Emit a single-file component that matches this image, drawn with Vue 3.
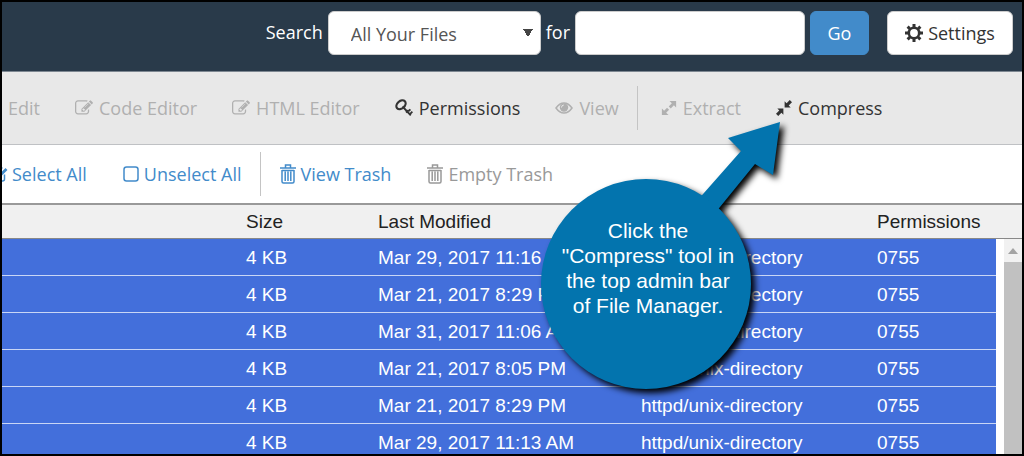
<script setup>
import { ref } from 'vue'

const scope = ref('all')
const query = ref('')

const tools = [
  { label: 'Edit', icon: 'edit' },
  { label: 'Code Editor', icon: 'edit' },
  { label: 'HTML Editor', icon: 'edit' },
  { label: 'Permissions', icon: 'key', enabled: true },
  { label: 'View', icon: 'eye' },
  { label: 'Extract', icon: 'extract', divided: true },
  { label: 'Compress', icon: 'compress', enabled: true }
]

const actions = [
  { label: 'Select All', icon: 'check', enabled: true },
  { label: 'Unselect All', icon: 'box', enabled: true },
  { label: 'View Trash', icon: 'trash', enabled: true, divided: true },
  { label: 'Empty Trash', icon: 'trash' }
]

const files = [
  'Mar 29, 2017 11:16 AM',
  'Mar 21, 2017 8:29 PM',
  'Mar 31, 2017 11:06 AM',
  'Mar 21, 2017 8:05 PM',
  'Mar 21, 2017 8:29 PM',
  'Mar 29, 2017 11:13 AM'
].map((modified, id) => ({ id, size: '4 KB', modified, type: 'httpd/unix-directory', mode: '0755' }))
</script>

<template>
  <div class="page">
    <svg class="sprite" aria-hidden="true">
      <symbol id="edit" viewBox="0 0 1792 1792">
        <path d="M888 1184l116-116-152-152-116 116v56h96v96h56zm440-720q-16-16-33 1l-350 350q-17 17-1 33t33-1l350-350q17-17 1-33zm80 594v190q0 119-84.5 203.5t-203.5 84.5h-832q-119 0-203.5-84.5t-84.5-203.5v-832q0-119 84.5-203.5t203.5-84.5h832q63 0 117 25 15 7 18 23 3 17-9 29l-49 49q-14 14-32 8-23-6-45-6h-832q-66 0-113 47t-47 113v832q0 66 47 113t113 47h832q66 0 113-47t47-113v-126q0-13 9-22l64-64q15-15 35-7t20 29zm-96-738l288 288-672 672h-288v-288zm444 132l-92 92-288-288 92-92q28-28 68-28t68 28l152 152q28 28 28 68t-28 68z" />
      </symbol>
      <symbol id="eye" viewBox="0 0 18 18">
        <path d="M1 9q3.500-5 8-5t8 5q-3.500 5-8 5t-8-5z" fill="none" stroke="currentColor" stroke-width="1.500" />
        <circle cx="9" cy="8.500" r="4.200" />
        <path d="M6.500 8.500q0-2.300 2.300-2.500" fill="none" stroke="#e8e8e8" stroke-width="1" />
      </symbol>
      <symbol id="key" viewBox="0 0 18 18">
        <ellipse cx="6" cy="5.800" rx="5.200" ry="3.700" transform="rotate(-42 6 5.800)" fill="none" stroke="currentColor" stroke-width="2.200" />
        <path d="M7.500 7.500l8.300 8.800M11 13.400l2.600-2.200M13.600 12.200l1.800-1.900M14.200 15.800l3.200-3.200" fill="none" stroke="currentColor" stroke-width="1.900" />
      </symbol>
      <symbol id="extract" viewBox="0 0 18 18">
        <path d="M9.500 1H17v7.500l-2.500-2.500-3.500 3.500-2.300-2.300L12.200 3.700zM8.500 17H1V9.500L3.500 12l3.300-3.300 2.300 2.300L5.800 14.300z" />
      </symbol>
      <symbol id="compress" viewBox="0 0 18 18">
        <path d="M9.700 8.300V1.500l2.200 2.200L15.500 0 18 2.500l-3.700 3.600 2.200 2.200zM8.300 9.700v6.800l-2.200-2.200L2.500 18 0 15.500l3.700-3.600L1.500 9.700z" />
      </symbol>
      <symbol id="trash" viewBox="0 0 18 20">
        <path d="M1 4h16M6.500 3.500V1h5v2.500M3 6.500h12M3 6V17.500q0 1.500 1.500 1.500h9q1.500 0 1.500-1.500V6M6.200 7.500V17M9 7.500V17M11.800 7.500V17" fill="none" stroke="currentColor" stroke-width="1.500" />
      </symbol>
      <symbol id="box" viewBox="0 0 18 18">
        <rect x="2" y="2" width="14" height="14" rx="2.500" fill="none" stroke="currentColor" stroke-width="1.500" />
      </symbol>
      <symbol id="check" viewBox="0 0 18 18">
        <path d="M14.500 9.500v4.500q0 2-2 2h-8q-2 0-2-2V5q0-2 2-2h8" fill="none" stroke="currentColor" stroke-width="1.500" />
        <path d="M5.500 8l3.500 3.500L16.500 4" fill="none" stroke="currentColor" stroke-width="2.800" />
      </symbol>
      <symbol id="gear" viewBox="0 0 18 18">
        <circle cx="9" cy="9" r="5.200" fill="none" stroke="currentColor" stroke-width="2.600" />
        <path d="M9 0v4M9 14v4M0 9h4M14 9h4M2.600 2.600l2.700 2.700M12.700 12.700l2.700 2.700M2.600 15.400l2.700-2.700M12.700 5.300l2.700-2.700" fill="none" stroke="currentColor" stroke-width="3" />
      </symbol>
    </svg>

    <header class="topbar">
      <form class="search" @submit.prevent>
        <label for="scope">Search</label>
        <select id="scope" v-model="scope" class="field scope">
          <option value="all">All Your Files</option>
        </select>
        <label for="query">for</label>
        <input id="query" v-model="query" class="field query" type="text" />
        <button class="go" type="submit">Go</button>
      </form>
      <button class="settings" type="button">
        <svg class="icon" aria-hidden="true"><use href="#gear" /></svg>Settings
      </button>
    </header>

    <nav class="toolbar tools" aria-label="File tools">
      <template v-for="tool in tools" :key="tool.label">
        <span v-if="tool.divided" class="divider"></span>
        <button type="button" class="tool" :disabled="!tool.enabled">
          <svg class="icon" :class="tool.icon" aria-hidden="true"><use :href="'#' + tool.icon" /></svg>{{ tool.label }}
        </button>
      </template>
    </nav>

    <nav class="toolbar actions" aria-label="Selection">
      <template v-for="action in actions" :key="action.label">
        <span v-if="action.divided" class="divider"></span>
        <button type="button" class="tool" :disabled="!action.enabled">
          <svg class="icon" :class="action.icon" aria-hidden="true"><use :href="'#' + action.icon" /></svg>{{ action.label }}
        </button>
      </template>
    </nav>

    <main class="list">
      <table>
        <colgroup>
          <col class="c-name" />
          <col class="c-size" />
          <col class="c-modified" />
          <col class="c-type" />
          <col />
        </colgroup>
        <thead>
          <tr>
            <td></td>
            <th scope="col">Size</th>
            <th scope="col">Last Modified</th>
            <th scope="col" aria-label="Type"></th>
            <th scope="col">Permissions</th>
          </tr>
        </thead>
        <tbody>
          <tr v-for="file in files" :key="file.id">
            <td></td>
            <td>{{ file.size }}</td>
            <td>{{ file.modified }}</td>
            <td>{{ file.type }}</td>
            <td>{{ file.mode }}</td>
          </tr>
        </tbody>
      </table>
      <div class="scrollbar" aria-hidden="true">
        <div class="scroll-up"><span class="caret"></span></div>
        <div class="thumb"></div>
      </div>
    </main>

    <aside class="callout">
      <svg class="bubble" viewBox="0 0 260 290" aria-hidden="true">
        <path d="M239 22L187 38l13 13-60 68 17 15 57-70 18 11z" />
        <circle cx="105" cy="184" r="105" />
      </svg>
      <p class="message">Click the<br />"Compress" tool in<br />the top admin bar<br />of File Manager.</p>
    </aside>
  </div>
</template>

<style>
body {
  margin: 0;
}
</style>

<style scoped>
.page {
  position: relative;
  box-sizing: border-box;
  height: 100vh;
  border: 2px solid #000;
  overflow: hidden;
  display: flex;
  flex-direction: column;
  background: #fff;
  font-family: "Open Sans", "Noto Sans", sans-serif;
  font-size: 18px;
  line-height: 24px;
}

.sprite {
  position: absolute;
  width: 0;
  height: 0;
}

button {
  font: inherit;
  margin: 0;
  cursor: pointer;
}

.icon {
  width: 18px;
  height: 18px;
  flex: none;
  fill: currentColor;
}

.icon.extract,
.icon.compress {
  width: 16px;
  height: 16px;
}

.icon.trash {
  height: 20px;
}

.topbar {
  flex: none;
  display: flex;
  justify-content: flex-end;
  gap: 18px;
  padding: 9px 9px 16px;
  border-bottom: 1px solid #7d8791;
  background: #293a4a;
}

.search {
  display: flex;
  align-items: center;
  gap: 5px;
}

.search label {
  color: #fff;
  padding-bottom: 2px;
}

.field {
  box-sizing: border-box;
  height: 44px;
  border: 1px solid #ccc;
  border-radius: 6px;
  background-color: #fff;
  color: #555;
  font: inherit;
}

.scope {
  width: 213px;
  padding: 2px 22px 0;
  appearance: none;
  background-image: conic-gradient(from -32deg at 50% 100%, #444 64deg, transparent 0);
  background-size: 10px 8px;
  background-position: right 7px top 17px;
  background-repeat: no-repeat;
}

.query {
  width: 230px;
  padding: 0 12px;
}

.go,
.settings {
  box-sizing: border-box;
  height: 44px;
  border-radius: 6px;
}

.go {
  width: 59px;
  border: 1px solid #428bca;
  background: #428bca;
  color: #fff;
}

.settings {
  display: flex;
  align-items: center;
  justify-content: center;
  gap: 5px;
  width: 126px;
  padding: 0;
  border: 1px solid #ccc;
  background: #fff;
  color: #333;
}

.toolbar {
  flex: none;
  display: flex;
  align-items: center;
  gap: 35px;
}

.tools {
  height: 72px;
  border-bottom: 1px solid #bfc1c4;
  background: #e8e8e8;
}

.actions {
  height: 58px;
}

.tool {
  display: flex;
  align-items: center;
  gap: 6px;
  padding: 0;
  border: 0;
  background: none;
  color: #333;
  white-space: nowrap;
}

.tools .tool:first-child {
  margin-left: -18px;
}

.actions .tool:first-child {
  margin-left: -12px;
}

.actions .tool {
  gap: 4px;
  color: #428bca;
}

.tool:disabled {
  color: #b0b0b0;
  cursor: default;
}

.actions .tool:disabled {
  color: #999;
}

.divider {
  width: 1px;
  height: 44px;
  margin: 0 -17px;
  background: #c4c4c4;
}

.tools .divider {
  margin-right: -12px;
}

.list {
  position: relative;
  flex: 1;
  min-height: 0;
  overflow: hidden;
  border-top: 2px solid #999;
  font-family: "Liberation Sans", Arial, sans-serif;
  font-size: 19px;
}

table {
  width: 100%;
  table-layout: fixed;
  border-collapse: separate;
  border-spacing: 0;
}

.c-name {
  width: 244px;
}

.c-size {
  width: 132px;
}

.c-modified {
  width: 263px;
}

.c-type {
  width: 236px;
}

thead th,
thead td {
  height: 33px;
  padding: 0;
  border-bottom: 1px solid #888;
  background: #f0f0f0;
  color: #222;
  font-weight: 400;
  text-align: left;
}

tbody td {
  height: 34px;
  padding: 2px 0 0;
  border-bottom: 1px solid #c9d6f5;
  background: #436fdb;
  color: #fff;
  white-space: nowrap;
}

.scrollbar {
  position: absolute;
  top: 34px;
  right: 0;
  bottom: 0;
  width: 18px;
  padding-left: 8px;
  background: #fff;
  display: flex;
  flex-direction: column;
}

.scroll-up {
  flex: none;
  height: 23px;
  display: flex;
  align-items: center;
  justify-content: center;
  background: #f1f1f1;
}

.caret {
  border: 5px solid transparent;
  border-top: 0;
  border-bottom: 6px solid #a3a3a3;
}

.thumb {
  flex: 1;
  background: #c1c1c1;
}

.callout {
  position: absolute;
  left: 539px;
  top: 98px;
  width: 260px;
  color: #fff;
  font-family: "Liberation Sans", Arial, sans-serif;
  font-size: 21px;
  line-height: 25px;
}

.bubble {
  display: block;
  width: 260px;
  height: 290px;
  overflow: visible;
  fill: #0374ae;
  filter: drop-shadow(4px 4px 3px #000);
}

.message {
  position: absolute;
  top: 118px;
  left: 0;
  width: 214px;
  margin: 0;
  text-align: center;
}
</style>
